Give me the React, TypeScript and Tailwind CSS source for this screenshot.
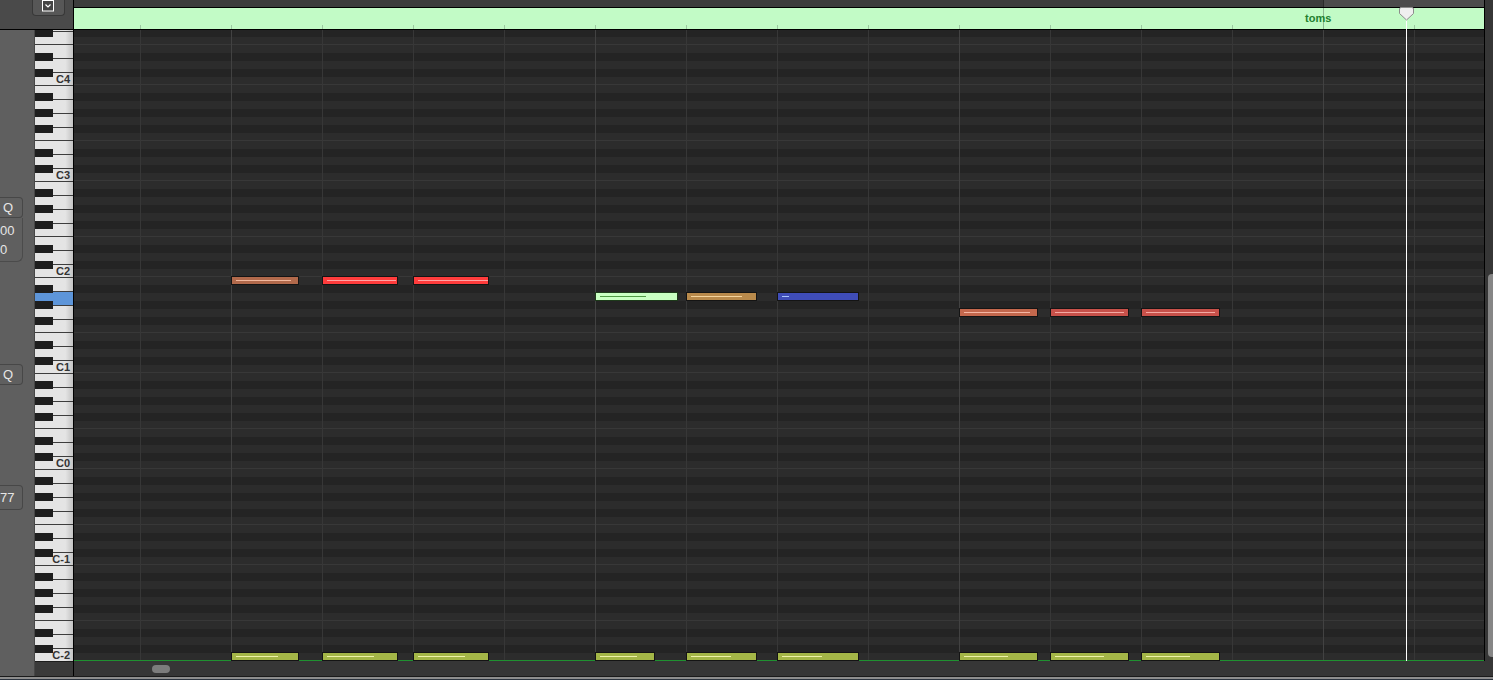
import React from "react";

type Tone = { box: string; line: string; edge: string };

const BROWN: Tone = { box: "bg-[#b1694b]", line: "bg-[#f2b79c]", edge: "border-[#141414]" };
const RED: Tone = { box: "bg-[#ff3c3c]", line: "bg-[#ffa3a3]", edge: "border-[#141414]" };
const MINT: Tone = { box: "bg-[#c9ffc2]", line: "bg-[#4f9a44]", edge: "border-[#1d3a1a]" };
const TAN: Tone = { box: "bg-[#b98a4b]", line: "bg-[#f5d49c]", edge: "border-[#141414]" };
const BLUE: Tone = { box: "bg-[#3f4db8]", line: "bg-[#a9c4ff]", edge: "border-[#141414]" };
const SALMON: Tone = { box: "bg-[#c4684d]", line: "bg-[#f4b7a4]", edge: "border-[#141414]" };
const BRICK: Tone = { box: "bg-[#c8514a]", line: "bg-[#f3aaa3]", edge: "border-[#141414]" };
const OLIVE: Tone = { box: "bg-[#a4b647]", line: "bg-[#eef2a8]", edge: "border-[#141414]" };

// pitch n counts semitones up from C-2, x is the screen column of the note start
const NOTES: { n: number; x: number; w: number; len: number; tone: Tone }[] = [
  { n: 47, x: 231, w: 68, len: 55, tone: BROWN },
  { n: 47, x: 322, w: 76, len: 69, tone: RED },
  { n: 47, x: 413, w: 76, len: 70, tone: RED },
  { n: 45, x: 595, w: 83, len: 46, tone: MINT },
  { n: 45, x: 686, w: 71, len: 51, tone: TAN },
  { n: 45, x: 777, w: 82, len: 7, tone: BLUE },
  { n: 43, x: 959, w: 79, len: 66, tone: SALMON },
  { n: 43, x: 1050, w: 79, len: 69, tone: BRICK },
  { n: 43, x: 1141, w: 79, len: 69, tone: BRICK },
  { n: 0, x: 231, w: 68, len: 42, tone: OLIVE },
  { n: 0, x: 322, w: 76, len: 47, tone: OLIVE },
  { n: 0, x: 413, w: 76, len: 47, tone: OLIVE },
  { n: 0, x: 595, w: 60, len: 37, tone: OLIVE },
  { n: 0, x: 686, w: 71, len: 40, tone: OLIVE },
  { n: 0, x: 777, w: 82, len: 40, tone: OLIVE },
  { n: 0, x: 959, w: 79, len: 44, tone: OLIVE },
  { n: 0, x: 1050, w: 79, len: 49, tone: OLIVE },
  { n: 0, x: 1141, w: 79, len: 44, tone: OLIVE },
];

const BLACK = new Set([1, 3, 6, 8, 10]);
const ROWS = Array.from({ length: 79 }, (_, i) => 78 - i);
const BEATS = Array.from({ length: 15 }, (_, i) => i);
const OCTAVES = [4, 3, 2, 1, 0, -1, -2];
const SEMIS = [11, 10, 9, 8, 7, 6, 5, 4, 3, 2, 1, 0];
const WHITE_KEYS = [
  { name: "B", h: "h-[14px]" },
  { name: "A", h: "h-[14px]" },
  { name: "G", h: "h-[14px]" },
  { name: "F", h: "h-[13px]" },
  { name: "E", h: "h-[14px]" },
  { name: "D", h: "h-[14px]" },
  { name: "C", h: "h-[13px]" },
];

function rowClass(n: number) {
  const pc = n % 12;
  const base = BLACK.has(pc) ? "bg-[#242424]" : "bg-[#2c2c2c]";
  if (n === 0) return base + " border-b border-[#1f9130]";
  if (pc === 0 || pc === 5) return base + " border-b border-[#383838]";
  return base;
}

function Octave({ octave, lit }: { octave: number; lit?: string }) {
  return (
    <div className="grid h-[96px] shrink-0 grid-cols-1">
      <div className="col-start-1 row-start-1 flex flex-col">
        {WHITE_KEYS.map((k) => (
          <div
            key={k.name}
            className={`${k.h} flex items-center justify-end border-t border-[#3d3d3d] pr-[3px] ${
              lit === k.name ? "bg-[#5d95d9]" : "bg-linear-to-r from-[#e4e4e4] from-80% to-[#c3c3c3]"
            }`}
          >
            {k.name === "C" && (
              <span className="text-[11px] leading-none font-bold text-[#333333]">C{octave}</span>
            )}
          </div>
        ))}
      </div>
      <div className="col-start-1 row-start-1 flex flex-col">
        {SEMIS.map((s) => (
          <div key={s} className="h-[8px]">
            {BLACK.has(s) && <div className="h-full w-[18px] bg-[#1e1e1e]" />}
          </div>
        ))}
      </div>
    </div>
  );
}

function Keyboard() {
  return (
    <div className="flex h-[631px] flex-col justify-end overflow-hidden">
      {OCTAVES.map((o) => (
        <Octave key={o} octave={o} lit={o === 1 ? "A" : undefined} />
      ))}
    </div>
  );
}

function SidePanel() {
  return (
    <div className="flex w-[34px] flex-col overflow-hidden bg-[#5f5f5f] text-[#e6e6e6]">
      <div className="mt-[167px] flex h-[21px] w-[23px] items-center rounded-r-[4px] border border-l-0 border-[#474747] pl-[3px] text-[13px]">
        Q
      </div>
      <div className="flex h-[44px] w-[23px] flex-col rounded-br-[6px] border-r border-b border-[#4b4b4b] pt-[3px] text-[13px] leading-[19px]">
        <span>00</span>
        <span>0</span>
      </div>
      <div className="mt-[102px] flex h-[21px] w-[23px] items-center rounded-r-[4px] border border-l-0 border-[#474747] pl-[3px] text-[13px]">
        Q
      </div>
      <div className="mt-[100px] flex h-[25px] w-[23px] items-center rounded-r-[4px] border border-l-0 border-[#474747] text-[13px]">
        77
      </div>
    </div>
  );
}

function Note({ n, x, w, len, tone }: (typeof NOTES)[number]) {
  return (
    <div
      className={`absolute flex h-[9px] items-center border pl-[4px] ${tone.box} ${tone.edge}`}
      style={{ left: x - 74, top: 622 - 8 * n, width: w }}
    >
      <div className={`h-px shrink-0 ${tone.line}`} style={{ width: len }} />
    </div>
  );
}

function EditorArea() {
  return (
    <div className="relative flex w-[1410px] flex-col">
      {/* ruler strip */}
      <div className="flex h-[7px]">
        <div className="w-[1249px] bg-[#3c3c3c]" />
        <div className="w-px bg-[#2a2a2a]" />
        <div className="flex-1 bg-[#4c4c4c]" />
      </div>
      <div className="h-px bg-black" />
      {/* region header */}
      <div className="grid h-[21px] grid-cols-1 grid-rows-1 overflow-hidden bg-[#c2fbc6]">
        <div className="col-start-1 row-start-1 flex pl-[66px]">
          {BEATS.map((i) => (
            <div key={i} className="flex w-[91px] shrink-0 flex-col justify-end">
              <div className={i === 13 ? "h-full w-px bg-[#8db892]" : "h-[4px] w-px bg-[#9cc9a1]"} />
            </div>
          ))}
        </div>
        <div className="col-start-1 row-start-1 flex items-center pl-[1231px] text-[11px] font-bold text-[#22802f]">
          toms
        </div>
      </div>
      <div className="h-px bg-black" />
      {/* note grid */}
      <div className="relative grid h-[631px] grid-cols-1 grid-rows-1 overflow-hidden">
        <div className="col-start-1 row-start-1 flex min-h-0 flex-col justify-end">
          {ROWS.map((n) => (
            <div key={n} className={"h-[8px] shrink-0 " + rowClass(n)} />
          ))}
        </div>
        <div className="col-start-1 row-start-1 flex h-[630px] pl-[66px]">
          {BEATS.map((i) => (
            <div
              key={i}
              className={`w-[91px] shrink-0 border-l ${i % 4 === 1 ? "border-[#424242]" : "border-[#373737]"}`}
            />
          ))}
        </div>
        {NOTES.map((note, i) => (
          <Note key={i} {...note} />
        ))}
      </div>
      {/* playhead */}
      <div className="absolute top-[8px] left-[1332px] h-[653px] w-px bg-white" />
      <svg className="absolute top-[7px] left-[1325px]" width="15" height="14" viewBox="0 0 15 14">
        <path
          d="M2 0.5 H13 Q14.5 0.5 14.5 2 V6.5 L7.5 13 L0.5 6.5 V2 Q0.5 0.5 2 0.5 Z"
          fill="#efefef"
          stroke="#8c8c8c"
        />
      </svg>
    </div>
  );
}

export default function App() {
  return (
    <div className="flex h-[680px] w-[1493px] flex-col overflow-hidden bg-[#2a2a2a] font-['Liberation_Sans',Arial,sans-serif]">
      <div className="flex h-[676px]">
        {/* left column: corner button, side panel and piano keys */}
        <div className="flex w-[73px] flex-col">
          <div className="flex h-[29px] bg-[#4a4a4a]">
            <div className="ml-[32px] flex h-[16px] w-[33px] justify-center rounded-b-[4px] border border-t-0 border-[#383838] bg-[#575757]">
              <svg width="13" height="12" viewBox="0 0 13 12">
                <rect x="0.5" y="0.5" width="11" height="10.5" fill="#444444" stroke="#ffffff" />
                <polyline points="3.5,4.5 6,7 8.5,4.5" fill="none" stroke="#ffffff" strokeWidth="1.2" />
              </svg>
            </div>
          </div>
          <div className="h-px bg-black" />
          <div className="flex h-[646px]">
            <SidePanel />
            <div className="w-px bg-[#474747]" />
            <div className="flex w-[38px] flex-col">
              <Keyboard />
              <div className="h-[15px] border-t border-[#1d1d1d] bg-[#3a3a3a]" />
            </div>
          </div>
        </div>
        <div className="w-px bg-black" />
        {/* editor, vertical scroller and horizontal scroller */}
        <div className="flex w-[1419px] flex-col bg-[#363636]">
          <div className="flex h-[661px]">
            <EditorArea />
            <div className="w-px bg-black" />
            <div className="w-[8px] pt-[274px]">
              <div className="ml-[3px] h-[383px] rounded-l-[4px] bg-[#868686]" />
            </div>
          </div>
          <div className="h-[15px] pt-[4px] pl-[78px]">
            <div className="h-[8px] w-[18px] rounded-full bg-[#7c7c7c]" />
          </div>
        </div>
      </div>
      <div className="h-px bg-[#1b1b1b]" />
      <div className="h-[2px] bg-[#8e8e8e]" />
      <div className="h-px bg-[#2d3540]" />
    </div>
  );
}
